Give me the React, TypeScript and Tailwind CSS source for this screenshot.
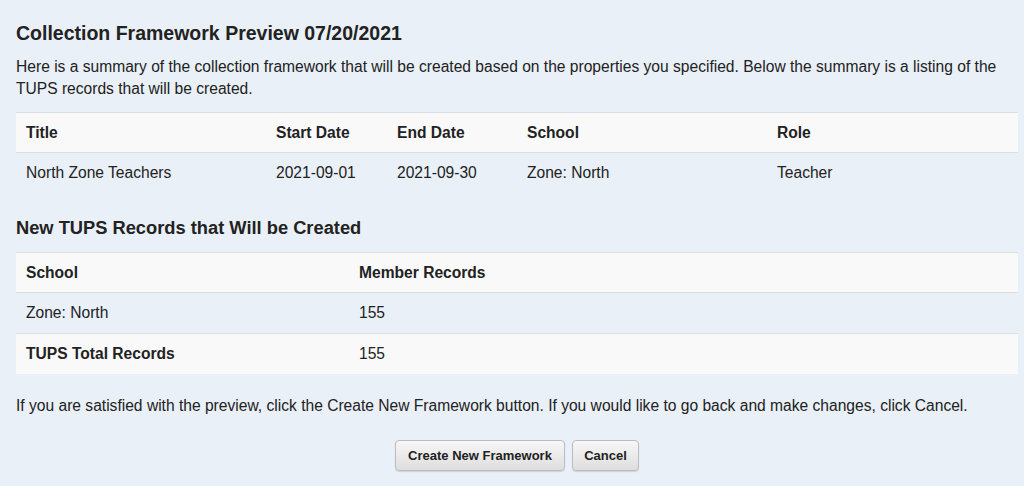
import React from 'react';

const summaryCols = [
  { label: 'Title', value: 'North Zone Teachers', w: 'w-[250px]' },
  { label: 'Start Date', value: '2021-09-01', w: 'w-[121px]' },
  { label: 'End Date', value: '2021-09-30', w: 'w-[130px]' },
  { label: 'School', value: 'Zone: North', w: 'w-[250px]' },
  { label: 'Role', value: 'Teacher', w: 'flex-1' },
];

const Btn: React.FC<{ children: React.ReactNode; className?: string }> = ({ children, className = '' }) => (
  <button
    className={`h-[31px] rounded-[4px] border border-[#b9bcc0] bg-gradient-to-b from-[#f7f7f7] to-[#dedede] text-[13px] font-bold text-[#222] shadow-[0_1px_1px_rgba(0,0,0,0.12)] ${className}`}
  >
    {children}
  </button>
);

export default function App() {
  return (
    <div className="min-h-[486px] w-[1024px] bg-[#e9f0f7] pl-4 pr-[6px] pt-[21px] font-['Liberation_Sans',Arial,sans-serif] text-[#222]">
      <h1 className="text-[19.5px] font-bold leading-[24px]">Collection Framework Preview 07/20/2021</h1>
      <p className="mt-[11px] text-[15.6px] leading-[22px]">
        Here is a summary of the collection framework that will be created based on the properties you specified. Below the summary is a listing of the TUPS records that will be created.
      </p>

      {/* summary table */}
      <div className="mt-[12px] text-[15.6px]">
        <div className="flex h-[41px] items-center border-y border-[#dcdfe2] bg-[#f9f9f9] px-[10px] font-bold">
          {summaryCols.map((c) => (
            <div key={c.label} className={c.w}>{c.label}</div>
          ))}
        </div>
        <div className="flex h-[40px] items-center px-[10px]">
          {summaryCols.map((c) => (
            <div key={c.label} className={c.w}>{c.value}</div>
          ))}
        </div>
      </div>

      <h2 className="mt-[23px] text-[18.3px] font-bold leading-[24px]">New TUPS Records that Will be Created</h2>

      {/* records table */}
      <div className="mt-[12px] text-[15.6px]">
        <div className="flex h-[41px] items-center border-y border-[#dcdfe2] bg-[#f9f9f9] px-[10px] font-bold">
          <div className="w-[333px]">School</div>
          <div>Member Records</div>
        </div>
        <div className="flex h-[41px] items-center border-b border-[#dcdfe2] px-[10px]">
          <div className="w-[333px]">Zone: North</div>
          <div>155</div>
        </div>
        <div className="flex h-[40px] items-center bg-[#f9f9f9] px-[10px]">
          <div className="w-[333px] font-bold">TUPS Total Records</div>
          <div>155</div>
        </div>
      </div>

      <p className="mt-[21px] text-[15.6px] leading-[22px]">
        If you are satisfied with the preview, click the Create New Framework button. If you would like to go back and make changes, click Cancel.
      </p>

      <div className="mt-[23px] flex justify-center gap-[7px] pb-4">
        <Btn className="w-[170px]">Create New Framework</Btn>
        <Btn className="w-[67px]">Cancel</Btn>
      </div>
    </div>
  );
}
